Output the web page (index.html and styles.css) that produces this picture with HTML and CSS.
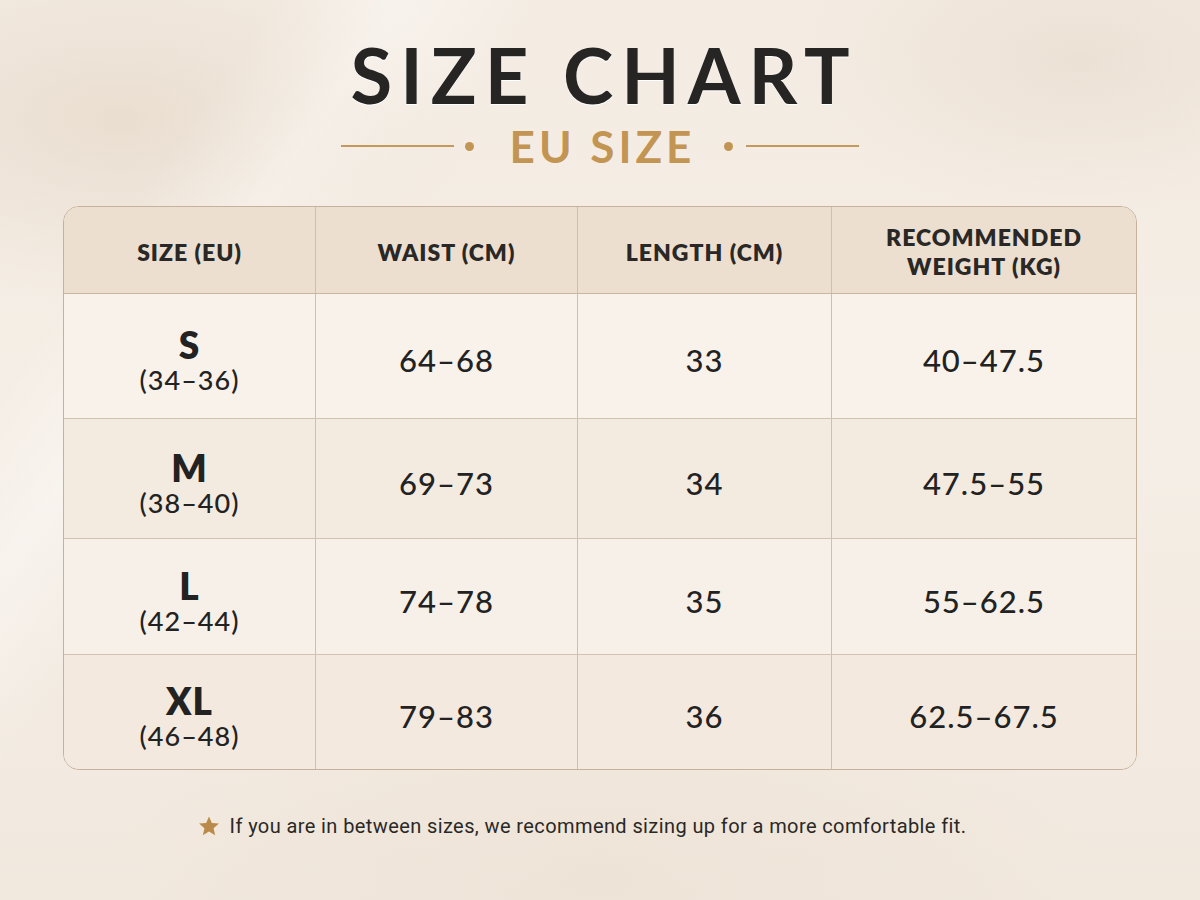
FILE: index.html
```html
<!DOCTYPE html>
<html>
<head>
<meta charset="utf-8">
<link rel="stylesheet" href="styles.css">
</head>
<body>
<div class="page">
  <h1 class="title">SIZE CHART</h1>
  <div class="subtitle">
    <span class="rule"></span><span class="dot dot-l"></span>
    <span class="sub-text">EU SIZE</span>
    <span class="dot dot-r"></span><span class="rule"></span>
  </div>
  <div class="chart">
    <div class="row head">
      <div class="cell">SIZE (EU)</div>
      <div class="cell">WAIST (CM)</div>
      <div class="cell">LENGTH (CM)</div>
      <div class="cell">RECOMMENDED<br>WEIGHT (KG)</div>
    </div>
    <div class="row r1">
      <div class="cell size"><span class="big">S</span><span class="eu">(34–36)</span></div>
      <div class="cell">64–68</div>
      <div class="cell">33</div>
      <div class="cell">40–47.5</div>
    </div>
    <div class="row r2">
      <div class="cell size"><span class="big">M</span><span class="eu">(38–40)</span></div>
      <div class="cell">69–73</div>
      <div class="cell">34</div>
      <div class="cell">47.5–55</div>
    </div>
    <div class="row r3">
      <div class="cell size"><span class="big">L</span><span class="eu">(42–44)</span></div>
      <div class="cell">74–78</div>
      <div class="cell">35</div>
      <div class="cell">55–62.5</div>
    </div>
    <div class="row r4">
      <div class="cell size"><span class="big">XL</span><span class="eu">(46–48)</span></div>
      <div class="cell">79–83</div>
      <div class="cell">36</div>
      <div class="cell">62.5–67.5</div>
    </div>
  </div>
  <p class="note"><svg class="star" width="22" height="22" viewBox="0 0 24 24"><path d="M12 1.5l3.1 7.1 7.7.7-5.8 5.1 1.7 7.6L12 18l-6.7 4 1.7-7.6L1.2 9.3l7.7-.7z" fill="#b98a4a"/></svg>If you are in between sizes, we recommend sizing up for a more comfortable fit.</p>
</div>
</body>
</html>
```
FILE: styles.css
```css
html, body {
  margin: 0;
  padding: 0;
}
body {
  width: 1200px;
  height: 900px;
  overflow: hidden;
  font-family: "Lato", "Noto Sans", sans-serif;
  color: #222;
  background:
    linear-gradient(125deg, transparent 15%, rgba(255,255,255,0.35) 22%, transparent 30%),
    radial-gradient(ellipse 500px 260px at 120px 120px, rgba(225,210,192,0.55), transparent 70%),
    radial-gradient(ellipse 420px 220px at 1080px 60px, rgba(228,214,198,0.5), transparent 70%),
    radial-gradient(ellipse 700px 300px at 600px 880px, rgba(236,224,210,0.6), transparent 70%),
    linear-gradient(180deg, #f4ece3 0%, #f5eee6 50%, #f1e8de 100%);
}
.page {
  display: flex;
  flex-direction: column;
  align-items: center;
  padding-top: 30px;
}
.title {
  margin: 0;
  font-size: 76px;
  line-height: 90px;
  font-weight: 700;
  letter-spacing: 8px;
  padding-left: 8px;
  color: #262524;
  text-shadow: 0 1px 0 #fff;
}
.subtitle {
  display: flex;
  align-items: center;
  height: 52px;
}
.rule {
  width: 113px;
  height: 2px;
  background: #c49a5c;
}
.dot {
  width: 9px;
  height: 9px;
  border-radius: 50%;
  background: #c29554;
}
.dot-l { margin: 0 36px 0 11px; }
.dot-r { margin: 0 13px 0 29px; }
.sub-text {
  font-size: 44px;
  font-weight: 700;
  letter-spacing: 4px;
  color: #c39553;
}
.chart {
  margin-top: 34px;
  width: 1072px;
  border: 1px solid #c6b29c;
  border-radius: 16px;
  overflow: hidden;
  background: #f7f0e8;
}
.row {
  display: grid;
  grid-template-columns: 251px 262px 254px 1fr;
  border-top: 1px solid #d2c2b0;
}
.row.head {
  border-top: none;
  height: 86px;
  background: #ecdfcf;
  border-bottom: 1px solid #c9b6a1;
}
.row.head + .row { border-top: none; }
.r1 { height: 124px; background: #f8f2eb; }
.r2 { height: 119px; background: #f3eae0; }
.r3 { height: 115px; background: #f7f0e8; }
.r4 { height: 114px; background: #f3e9df; }
.cell {
  display: flex;
  flex-direction: column;
  align-items: center;
  justify-content: center;
  text-align: center;
  font-size: 31px;
  font-weight: 500;
  letter-spacing: 1px;
  padding-top: 8px;
  color: #222;
  border-left: 1px solid #d0bfac;
}
.cell:first-child { border-left: none; }
.head .cell {
  padding-top: 4px;
  font-size: 23px;
  font-weight: 800;
  letter-spacing: 1px;
  line-height: 29px;
  color: #2a2826;
}
.cell.size { padding-top: 10px; }
.size .big {
  font-size: 37px;
  font-weight: 800;
  line-height: 38px;
}
.size .eu {
  font-size: 27px;
  font-weight: 500;
  line-height: 32px;
  letter-spacing: 1px;
}
.note {
  margin: 44px 36px 0 0;
  display: flex;
  align-items: center;
  font-family: "Roboto", "Liberation Sans", sans-serif;
  font-size: 20px;
  letter-spacing: 0.4px;
  color: #2a2826;
}
.star {
  margin-right: 10px;
}
```
